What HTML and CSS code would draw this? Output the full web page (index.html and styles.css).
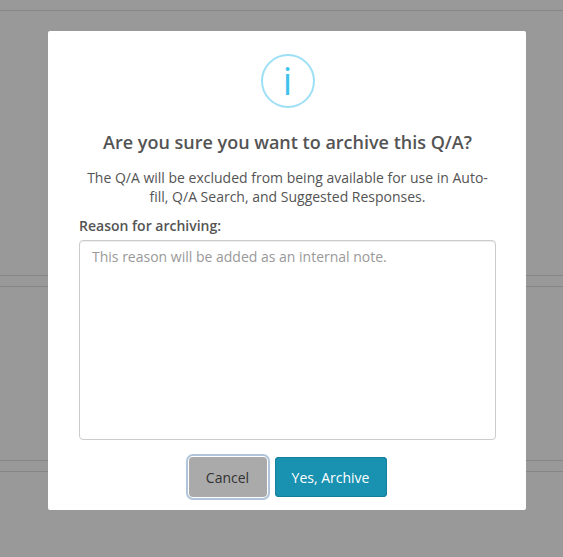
FILE: index.html
```html
<!DOCTYPE html>
<html lang="en">
<head>
    <meta charset="UTF-8">
    <meta name="viewport" content="width=device-width, initial-scale=1.0">
    <title>Archive Q/A</title>
    <link rel="stylesheet" href="styles.css">
</head>
<body>
    <div class="page">
        <div class="panel panel-large"></div>
        <div class="panel"></div>
        <div class="panel panel-last"></div>
    </div>
    <div class="overlay">
        <div class="modal" role="dialog" aria-labelledby="modal-title">
            <div class="icon">i</div>
            <h2 id="modal-title" class="title">Are you sure you want to archive this Q/A?</h2>
            <p class="message">The Q/A will be excluded from being available for use in Auto-<br>fill, Q/A Search, and Suggested Responses.</p>
            <label class="label" for="reason">Reason for archiving:</label>
            <textarea id="reason" class="reason" placeholder="This reason will be added as an internal note."></textarea>
            <div class="actions">
                <button class="btn cancel">Cancel</button>
                <button class="btn confirm">Yes, Archive</button>
            </div>
        </div>
    </div>
</body>
</html>
```

FILE: styles.css
```css
* {
    box-sizing: border-box;
}

body {
    margin: 0;
    height: 557px;
    overflow: hidden;
    background-color: #999;
    font-family: "Open Sans", sans-serif;
    font-size: 14px;
    color: #545454;
}

.page {
    display: flex;
    flex-direction: column;
    gap: 10px;
    padding-top: 10px;
}

.panel {
    height: 175px;
    border-top: 1px solid #868686;
    border-bottom: 1px solid #868686;
}

.panel-large {
    height: 266px;
}

.panel-last {
    border-bottom: none;
}

.overlay {
    position: absolute;
    top: 0;
    left: 0;
    padding: 31px 0 0 48px;
}

.modal {
    display: flex;
    flex-direction: column;
    width: 478px;
    height: 479px;
    padding: 23px 30px 0 31px;
    border-radius: 2px;
    background-color: #fff;
}

.icon {
    align-self: center;
    width: 54px;
    height: 54px;
    border: 2px solid #9de0f6;
    border-radius: 50%;
    color: #3fc3ee;
    font-size: 37.5px;
    line-height: 50px;
    text-align: center;
}

.title {
    margin: 22px 0 0;
    font-size: 18px;
    font-weight: 600;
    line-height: 25px;
    text-align: center;
}

.message {
    margin: 13px 0 0;
    line-height: 19px;
    text-align: center;
}

.label {
    margin-top: 10px;
    font-weight: 600;
    line-height: 20px;
}

.reason {
    width: 417px;
    height: 200px;
    margin-top: 4px;
    padding: 6px 12px;
    border: 1px solid #ccc;
    border-radius: 4px;
    box-shadow: inset 0 1px 1px rgba(0, 0, 0, 0.075);
    font-family: inherit;
    font-size: 14px;
    line-height: 20px;
    resize: none;
}

.reason::placeholder {
    color: #999;
}

.actions {
    display: flex;
    justify-content: center;
    gap: 8px;
    margin-top: 17px;
}

.btn {
    height: 40px;
    padding: 0;
    border: none;
    border-radius: 4px;
    font-family: inherit;
    font-size: 14px;
}

.cancel {
    width: 78px;
    background-color: #aaa;
    color: #333;
    box-shadow: 0 0 0 1px #fff, 0 0 0 3px #b0c4da;
}

.confirm {
    width: 112px;
    background-color: #1991b1;
    color: #fff;
    box-shadow: inset 0 0 0 1px #167f9b;
}
```
